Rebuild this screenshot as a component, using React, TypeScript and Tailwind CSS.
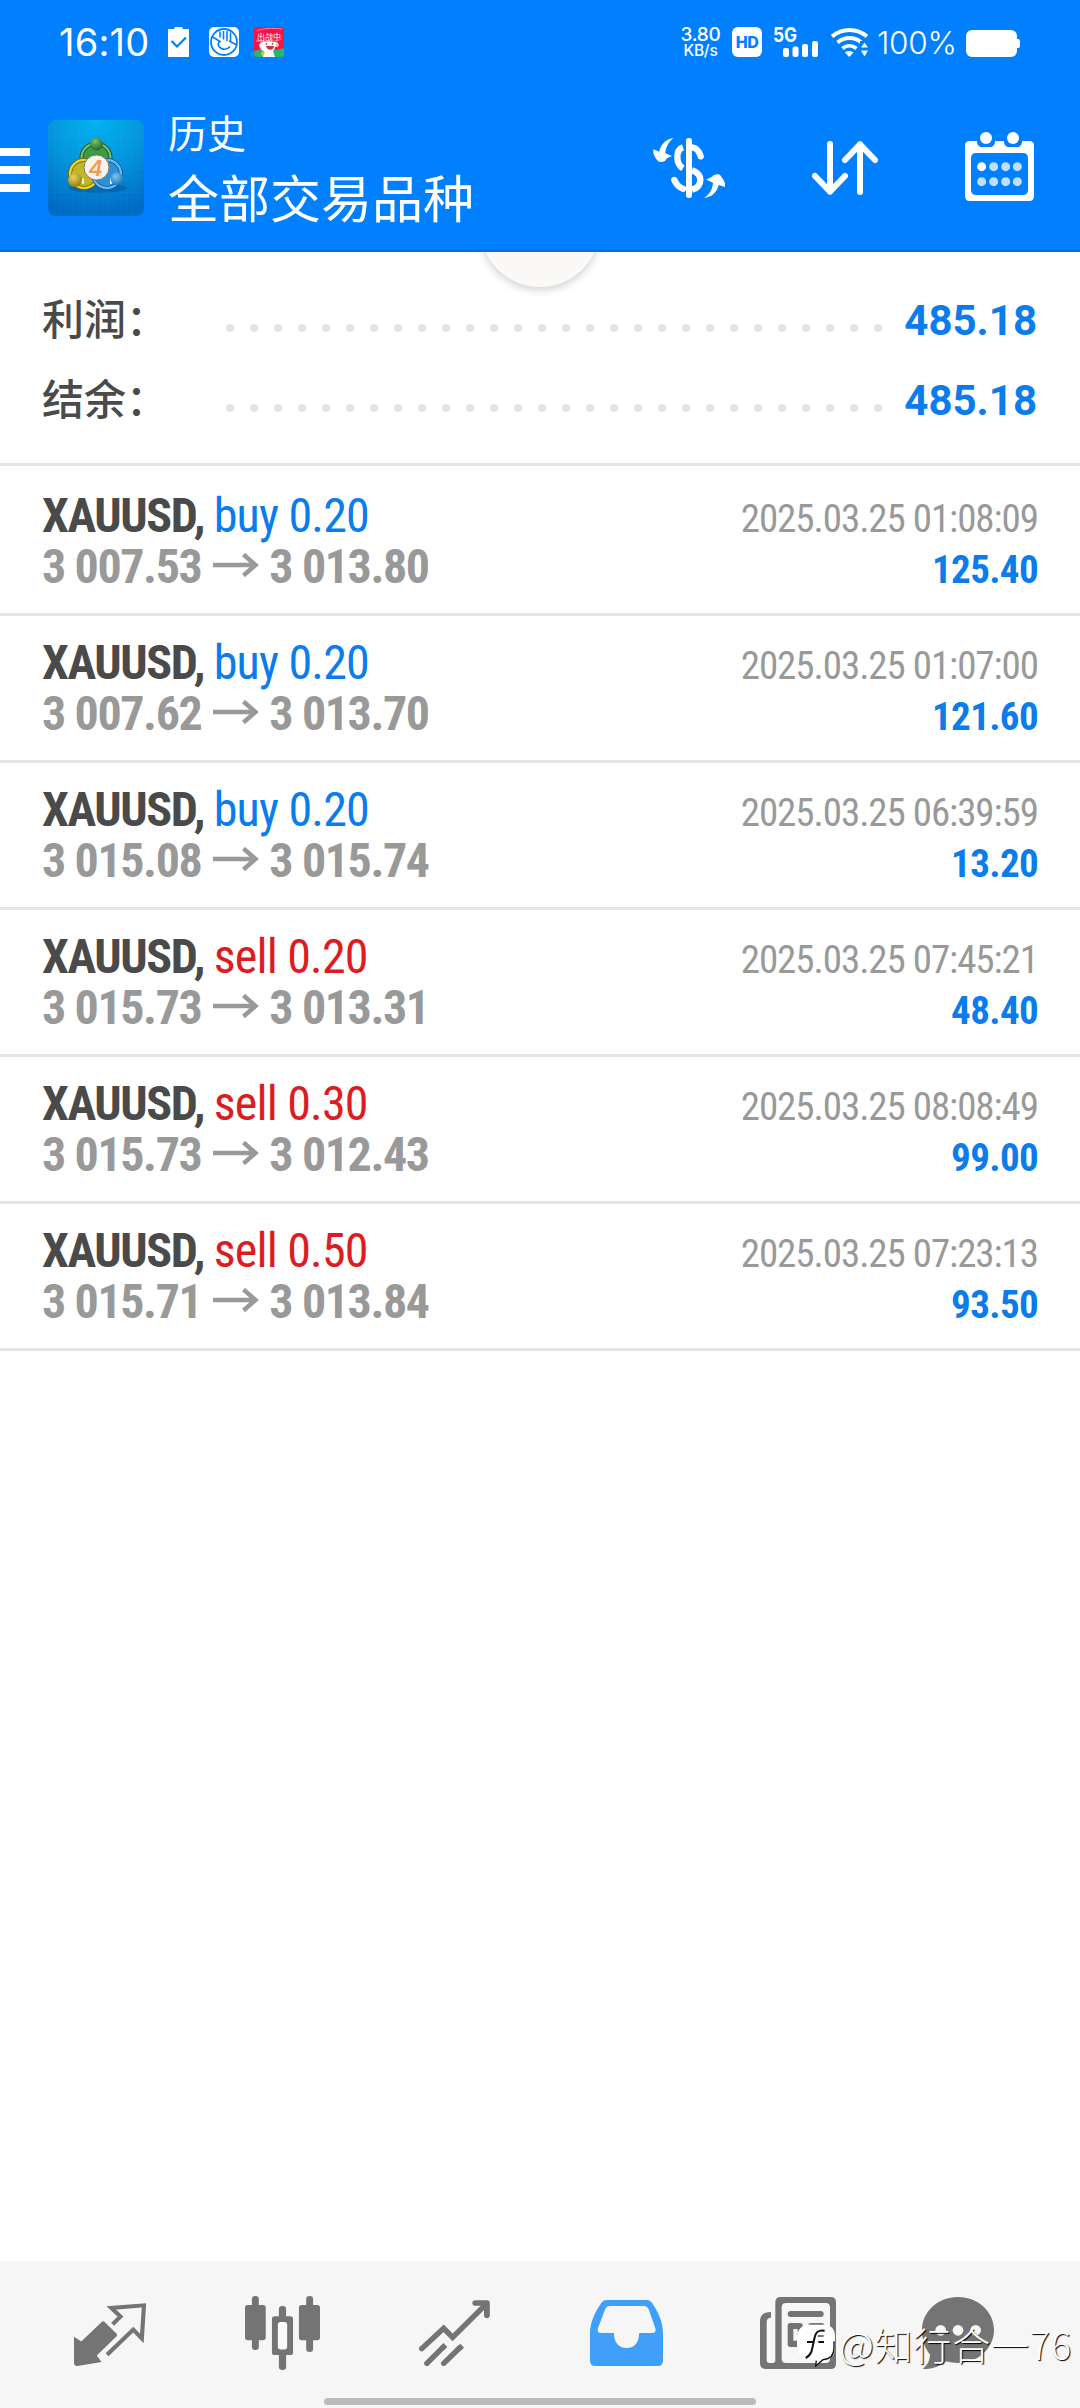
import React from 'react';
import clsx from 'clsx';

interface Deal {
  symbol: string;
  side: 'buy' | 'sell';
  volume: string;
  open: string;
  close: string;
  time: string;
  profit: string;
}

const deals: Deal[] = [
  { symbol: 'XAUUSD', side: 'buy', volume: '0.20', open: '3 007.53', close: '3 013.80', time: '2025.03.25 01:08:09', profit: '125.40' },
  { symbol: 'XAUUSD', side: 'buy', volume: '0.20', open: '3 007.62', close: '3 013.70', time: '2025.03.25 01:07:00', profit: '121.60' },
  { symbol: 'XAUUSD', side: 'buy', volume: '0.20', open: '3 015.08', close: '3 015.74', time: '2025.03.25 06:39:59', profit: '13.20' },
  { symbol: 'XAUUSD', side: 'sell', volume: '0.20', open: '3 015.73', close: '3 013.31', time: '2025.03.25 07:45:21', profit: '48.40' },
  { symbol: 'XAUUSD', side: 'sell', volume: '0.30', open: '3 015.73', close: '3 012.43', time: '2025.03.25 08:08:49', profit: '99.00' },
  { symbol: 'XAUUSD', side: 'sell', volume: '0.50', open: '3 015.71', close: '3 013.84', time: '2025.03.25 07:23:13', profit: '93.50' },
];

const summary = [
  { label: '利润：', value: '485.18' },
  { label: '结余：', value: '485.18' },
];

const StatusBar = () => (
  <div className="flex h-[84px] items-center justify-between pl-[59px] pr-[60px]">
    <div className="flex items-center">
      <span className="w-[109px] whitespace-nowrap font-[Inter,sans-serif] text-[38px] leading-[44px] tracking-[0.2px]">16:10</span>
      <svg className="w-[21px] h-[30px]" viewBox="0 0 21 30">
        <path d="M0 2h6l1-2h7l1 2h6v28H0z" fill="currentColor" />
        <path d="M3.500 14l5.500 5.500 9-9" fill="none" stroke="#0080ff" strokeWidth="2.200" />
      </svg>
      <svg className="ml-5 w-[30px] h-[30px]" viewBox="0 0 30 30">
        <rect width="30" height="30" rx="5" fill="currentColor" />
        <circle cx="15" cy="15" r="13" fill="none" stroke="#0080ff" strokeWidth="1.800" />
        <path d="M3 9.500l8 5c-2 1-2.500 3-1 5 3 4 8.500 3.500 11 0M20 14l7 3.500M11 4.500v6M14.500 4v8.500M18 4v10M21.500 5.500v9" fill="none" stroke="#0080ff" strokeWidth="1.600" />
      </svg>
      <svg className="ml-[15px] w-[30px] h-[30px]" viewBox="0 0 30 30">
        <rect width="30" height="30" rx="2" fill="#f5134a" />
        <path d="M0 24l8-2 14 1 8-2v7a2 2 0 0 1-2 2H2a2 2 0 0 1-2-2z" fill="#27b573" />
        <path d="M3 4c5-3 16-3 25-2M2 14c8 1 18 1 26-2" stroke="#ff7c9c" fill="none" />
        <text x="15" y="12.500" textAnchor="middle" fontSize="8" fill="#fff" fontFamily="Noto Sans CJK SC, sans-serif">出战中</text>
        <path d="M5 18c1-3 4-4 7-3 2-1 5-1 7 0 3-1 6 1 6 4l-4 1c0 2-1 3-2 4l2 6H9l1-6c-2 0-4-3-5-6z" fill="#fff" />
        <path d="M12 19h8c0 5-7 5-8 0" fill="#cf3045" />
        <path d="M22 16l3 2-2 3zM8 24l3 1-2 4-2-1z" fill="#f7b53a" />
        <circle cx="12.500" cy="17" r=".8" fill="#222" />
        <circle cx="18.500" cy="17" r=".8" fill="#222" />
      </svg>
    </div>
    <div className="flex items-center font-[Inter,sans-serif]">
      <div className="flex w-[39px] flex-col items-center whitespace-nowrap font-medium">
        <span className="text-[19px] leading-[17px] tracking-[-0.3px]">3.80</span>
        <span className="text-[15.500px] leading-[15px] tracking-[-0.2px]">KB/s</span>
      </div>
      <div className="ml-[12px] flex h-[30px] w-[30px] items-center justify-center rounded-[6px] bg-white text-[16px] font-extrabold tracking-[-0.5px] text-[#0080ff]">HD</div>
      <svg className="ml-[11px] w-[46px] h-[30px] overflow-visible" viewBox="0 0 46 30">
        <text x="0" y="15" fontSize="20" fontWeight="700" textLength="24" lengthAdjust="spacingAndGlyphs" fill="currentColor">5G</text>
        <rect x="10" y="21" width="6" height="9" rx="2" fill="currentColor" />
        <rect x="19.500" y="19.500" width="6" height="10.500" rx="2" fill="currentColor" />
        <rect x="29" y="17" width="6" height="13" rx="2" fill="currentColor" />
        <rect x="39" y="14" width="6" height="16" rx="2" fill="currentColor" />
      </svg>
      <svg className="ml-[12px] w-[37px] h-[30px]" viewBox="0 0 37 30">
        <g fill="none" stroke="currentColor" strokeWidth="3.800">
          <path d="M1 9.500C11 .800 26 .800 36 9.500" />
          <path d="M6.500 15.500c7-6 17-6 24 0" />
          <path d="M11.500 21.500c4-3.500 9.500-3.500 14 0" />
        </g>
        <path d="M14 25.500c2.500-2 6-2 8.500 0L18.200 30z" fill="currentColor" />
        <path d="M29 14h9v16h-9z" fill="#0080ff" />
        <path d="M33.500 15.500l3.500 5h-7zM33.500 29.500l3.500-6h-7z" fill="currentColor" />
      </svg>
      <span className="ml-[9px] w-[80px] whitespace-nowrap text-[31.500px] font-light leading-[34px] tracking-[-0.3px] pt-[2px]">100%</span>
      <svg className="ml-[9px] w-[54px] h-[27px] mt-[2px]" viewBox="0 0 54 27">
        <rect width="51" height="27" rx="6" fill="currentColor" />
        <rect x="46" y="9" width="8" height="9" rx="2" fill="currentColor" />
      </svg>
    </div>
  </div>
);

const AppLogo = () => (
  <svg className="ml-[18px] mt-9 w-24 h-24" viewBox="0 0 96 96">
    <defs>
      <radialGradient id="tile" cx=".5" cy="0" r="1">
        <stop offset="0" stopColor="#00b4f0" />
        <stop offset=".5" stopColor="#0494dc" />
        <stop offset="1" stopColor="#0069c4" />
      </radialGradient>
      <radialGradient id="green" cx=".4" cy=".3" r=".7">
        <stop offset="0" stopColor="#7fbf6d" />
        <stop offset="1" stopColor="#1d6e2c" />
      </radialGradient>
      <radialGradient id="gold" cx=".4" cy=".3" r=".7">
        <stop offset="0" stopColor="#e6d566" />
        <stop offset="1" stopColor="#94820f" />
      </radialGradient>
      <radialGradient id="blue" cx=".4" cy=".3" r=".7">
        <stop offset="0" stopColor="#7fc6f2" />
        <stop offset="1" stopColor="#1673bd" />
      </radialGradient>
      <pattern id="mesh" width="6" height="6" patternUnits="userSpaceOnUse">
        <path d="M0 0h6M0 0v6" stroke="#3cc0f2" strokeWidth=".5" opacity=".2" />
      </pattern>
    </defs>
    <rect width="96" height="96" rx="8" fill="url(#tile)" />
    <rect width="96" height="96" rx="8" fill="url(#mesh)" />
    <ellipse cx="50" cy="68" rx="29" ry="5" fill="#023f78" opacity=".35" />
    <circle cx="48" cy="38" r="14.500" fill="#3f9a48" stroke="#1a5c2a" strokeWidth="4" />
    <circle cx="48" cy="38" r="14.500" fill="none" stroke="#7fc56d" strokeWidth="2" />
    <circle cx="36" cy="54" r="14" fill="#c4b623" stroke="#675c06" strokeWidth="4" />
    <circle cx="36" cy="54" r="14" fill="none" stroke="#e0d136" strokeWidth="2.500" />
    <circle cx="59" cy="54" r="14" fill="#2f90da" stroke="#0d4f8d" strokeWidth="4" />
    <circle cx="59" cy="54" r="14" fill="none" stroke="#62b9f0" strokeWidth="2.500" />
    <path d="M30 62l6-4v6zM62 64v-6l6 5z" fill="#eef5ea" />
    <circle cx="48.500" cy="24" r="6.500" fill="url(#green)" />
    <circle cx="27" cy="60" r="7" fill="url(#gold)" />
    <circle cx="69" cy="59" r="6.500" fill="url(#blue)" />
    <circle cx="48.500" cy="47.500" r="12.500" fill="#f6f3f0" stroke="#77806a" strokeWidth="1" />
    <text x="47.500" y="55.500" textAnchor="middle" fontSize="22" fontWeight="600" fontStyle="italic" fill="#f59a4a" fontFamily="Inter, sans-serif">4</text>
  </svg>
);

const CurrencyIcon = () => (
  <svg className="w-[72px] h-[60px]" viewBox="42 369 216 180" fill="currentColor">
    <rect x="141" y="369" width="18" height="180" rx="8" />
    <g fill="none" stroke="currentColor" strokeWidth="19">
      <path d="M132 397c-12 4-17 14-17 29 0 18 7 28 17 34" />
      <path d="M159 397c12 1 21 9 26 27" strokeLinecap="round" />
      <path d="M159 466c18 6 25 17 25 29 0 16-10 25-25 29" />
      <path d="M132 521c-12-4-20-12-26-26" strokeLinecap="round" />
    </g>
    <path d="M104 369c-16 12-24 28-25 46l20 8-14 6c-4 3-5 8-9 10-5 2-14 3-18 0-8-10-17-19-15-36l18 7c4-22 20-38 43-41z" />
    <path d="M195 549c18-12 26-28 27-46l-20-9 14-7c4-3 6-6 11-8 6-2 14-3 18 3 6 10 15 16 13 34l-19-6c-5 22-20 36-44 39z" />
  </svg>
);

const SortIcon = () => (
  <svg className="w-[66px] h-[54px]" viewBox="519 378 198 162" fill="none" stroke="currentColor" strokeWidth="18" strokeLinecap="round" strokeLinejoin="round">
    <path d="M573 387v143M528 483l45 47 45-47M663 531V388M618 435l45-47 45 47" />
  </svg>
);

const CalendarIcon = () => (
  <svg className="w-[69px] h-[69px]" viewBox="978 351 207 207" fill="currentColor">
    <path fillRule="evenodd" d="M992 378h22c0 12 6 18 16 18h22c10 0 16-6 16-18h27c0 12 6 18 16 18h22c10 0 16-6 16-18h22q14 0 14 14v152q0 14-14 14H992q-14 0-14-14V392q0-14 14-14zM1012 414q-16 0-16 16v94q0 16 16 16h139q16 0 16-16v-94q0-16-16-16z" />
    <circle cx="1041" cy="369" r="18" />
    <circle cx="1122" cy="369" r="18" />
    <circle cx="1028" cy="455" r="13.500" />
    <g opacity=".75">
      <circle cx="1064" cy="455" r="13.500" />
      <circle cx="1100" cy="455" r="13.500" />
      <circle cx="1135" cy="455" r="13.500" />
      <circle cx="1028" cy="500" r="13.500" />
      <circle cx="1064" cy="500" r="13.500" />
      <circle cx="1100" cy="500" r="13.500" />
      <circle cx="1135" cy="500" r="13.500" />
    </g>
  </svg>
);

const Header = () => (
  <header className="relative z-10 h-[252px] border-b-[3px] border-[#0b6fd6] bg-[#0080ff] text-white">
    <StatusBar />
    <div className="flex h-[165px] items-start">
      <div className="mt-16 flex w-[30px] flex-col gap-[10px]">
        <div className="h-2 bg-white" />
        <div className="h-2 bg-white" />
        <div className="h-2 bg-white" />
      </div>
      <AppLogo />
      <div className="ml-6 flex-1 whitespace-nowrap pt-[24px] font-['Noto_Sans_CJK_SC',sans-serif]">
        <div className="text-[39px] leading-[46px]">历史</div>
        <div className="pt-[10px] text-[51px] leading-[64px]">全部交易品种</div>
      </div>
      <div className="flex h-[165px] items-center pr-[46px] pt-[3px]">
        <CurrencyIcon />
        <div className="ml-[87px]"><SortIcon /></div>
        <div className="ml-[87px] -mt-[3px]"><CalendarIcon /></div>
      </div>
    </div>
  </header>
);

const Summary = () => (
  <section className="relative h-[214px] overflow-hidden border-b-[3px] border-[#e5e5e5] pt-[27px]">
    {/* pull-to-refresh handle, half hidden under the header */}
    <div className="absolute left-[480px] top-[-85px] h-[120px] w-[120px] rounded-full bg-[#faf9f8] shadow-[0_3px_9px_rgba(0,0,0,0.18)]" />
    {summary.map((item) => (
      <div key={item.label} className="relative flex h-20 items-center pl-[42px] pr-[43px]">
        <span className="w-[184px] pb-[5px] font-['Noto_Sans_CJK_SC',sans-serif] text-[42px] font-medium leading-[60px] text-[#4a4a4a]">{item.label}</span>
        <div className="flex flex-1 gap-4 pt-[18px]">
          {Array.from({ length: 28 }).map((_, i) => (
            <div key={i} className="h-2 w-2 shrink-0 rounded-full bg-[#e3e3e3]" />
          ))}
        </div>
        <span className="pt-[3px] font-[Roboto,sans-serif] text-[42px] font-bold leading-[60px] text-[#0a7cec]">{item.value}</span>
      </div>
    ))}
  </section>
);

const DealRow = ({ deal }: { deal: Deal }) => (
  <div className="flex h-[147px] justify-between border-b-[3px] border-[#e5e5e5] pl-[42px] pr-[42px] pt-[21px] font-['Roboto_Condensed',Roboto,sans-serif]">
    <div className="whitespace-nowrap text-[48px] leading-[51px]">
      <div>
        <span className="font-bold tracking-[-1.4px] text-[#4a4a4a]">{deal.symbol}, </span>
        <span className={clsx('tracking-[-0.8px]', deal.side === 'buy' ? 'text-[#0a7cec]' : 'text-[#dd1c22]')}>
          {deal.side} {deal.volume}
        </span>
      </div>
      <div className="flex items-center font-bold tracking-[-1.4px] text-[#999999]">
        <span>{deal.open}</span>
        <svg className="ml-[12px] mr-[10px] -mt-1 w-[46px] h-6" viewBox="0 0 46 24" fill="none" stroke="currentColor" strokeWidth="4.500">
          <path d="M0 12h43M30.500 1.500L42.500 12l-12 10.500" />
        </svg>
        <span>{deal.close}</span>
      </div>
    </div>
    <div className="whitespace-nowrap pt-[4px] text-right text-[39px] leading-[51px]">
      <div className="tracking-[-1.05px] text-[#999999]">{deal.time}</div>
      <div className="font-bold tracking-[-0.65px] text-[#0a7cec]">{deal.profit}</div>
    </div>
  </div>
);

const QuotesIcon = () => (
  <svg className="w-[72px] h-[63px]" viewBox="215 188 209 190" preserveAspectRatio="none">
    <path d="M297 244q4-2 7 1l34 35q4 5 0 9l-57 57 14 20-70 12q-10 1-10-8v-80l21 14z" fill="currentColor" />
    <path d="M327 252l23-23-27-26 95-8-6 100-25-27-76 76" fill="none" stroke="currentColor" strokeWidth="12" />
  </svg>
);

const ChartIcon = () => (
  <svg className="w-[75px] h-[74px]" viewBox="709 170 217 223" preserveAspectRatio="none" fill="currentColor">
    <rect x="729" y="170" width="20" height="163" rx="10" />
    <rect x="709" y="197" width="60" height="106" rx="8" />
    <rect x="886" y="170" width="20" height="169" rx="10" />
    <rect x="865" y="197" width="61" height="106" rx="8" />
    <rect x="807" y="200" width="21" height="193" rx="10" />
    <rect x="787" y="231" width="61" height="117" rx="8" />
    <rect x="804" y="248" width="27" height="83" rx="8" fill="#fafafa" />
  </svg>
);

const TradeIcon = () => (
  <svg className="w-[71px] h-[66px]" viewBox="1213 180 207 198" preserveAspectRatio="none" fill="none" stroke="currentColor" strokeWidth="16">
    <path d="M1221 326l64-61 26 27 94-96" strokeLinecap="round" />
    <path d="M1377 189h34v37" strokeWidth="17" strokeLinecap="round" strokeLinejoin="round" />
    <path d="M1290 315l-10 10M1339 317l-10 9" />
    <path d="M1282 323l-46 47M1331 324l-46 46" strokeLinecap="round" />
  </svg>
);

const HistoryIcon = () => (
  <svg className="w-[73px] h-[66px]" viewBox="145 180 211 198" preserveAspectRatio="none" fill="currentColor">
    <path fillRule="evenodd" d="M192 180h118q9 0 14 8c18 28 32 57 32 92v82q0 16-16 16H161q-16 0-16-16v-82c0-34 15-65 33-92q5-8 14-8zM203 198q-10 0-14 9l-21 58q-4 14 9 14h37c0 28 14 45 37 45s36-17 36-45h37q14 0 10-14l-19-56q-4-11-14-11z" />
  </svg>
);

const NewsIcon = () => (
  <svg className="w-[76px] h-[72px]" viewBox="66 51 228 216" fill="currentColor">
    <path fillRule="evenodd" d="M128 51h150q16 0 16 16v184q0 16-16 16H84q-18 0-18-18V124q0-28 33-28v17q-13 0-13 13v115q0 8 8 8h10q8 0 8-8V67q0-16 16-16zM144 69q-13 0-13 13v154q0 13 13 13h119q13 0 13-13V82q0-13-13-13z" />
    <rect x="149" y="93" width="108" height="18" rx="9" />
    <rect x="149" y="129" width="45" height="72" rx="8" />
    <rect x="211" y="129" width="48" height="17" rx="8" />
    <path d="M166 147h13v35h-13z" fill="#f6f6f6" />
  </svg>
);

const ChatIcon = () => (
  <svg className="w-[72px] h-[72px]" viewBox="546 51 216 216" fill="currentColor">
    <path d="M654 51c60 0 108 44 108 99s-48 99-108 99c-12 0-24-2-35-5-20 15-45 26-71 22 14-10 21-23 22-42-16-20-24-45-24-74 0-55 48-99 108-99z" />
    <g fill="#f6f6f6">
      <circle cx="602" cy="151" r="16" />
      <circle cx="654" cy="151" r="16" />
      <circle cx="707" cy="151" r="16" />
    </g>
  </svg>
);

const tabs = [QuotesIcon, ChartIcon, TradeIcon, HistoryIcon, NewsIcon, ChatIcon];

const TabBar = () => (
  <nav className="flex h-[147px] flex-col items-center bg-[#f6f6f6] text-[#747474]">
    <div className="flex h-[137px] w-full pl-6 pb-[17px]">
      {tabs.map((Icon, i) => (
        <div
          key={i}
          className={clsx(
            'flex shrink-0 items-center justify-center pt-[23px]',
            i === tabs.length - 1 ? 'w-[147px]' : 'w-[172px]',
            i === 3 && 'text-[#3f9ffb]',
            i === 0 && 'pt-[26px]',
          )}
        >
          <Icon />
        </div>
      ))}
    </div>
    <div className="h-[7px] w-[432px] rounded-full bg-[#bbbbbb]" />
  </nav>
);

const Watermark = () => (
  <div className="absolute bottom-[39px] right-[8px] z-20 flex items-center whitespace-nowrap text-white">
    <svg className="mr-[4px] mt-[2px] w-[38px] h-[44px]" viewBox="160 146 114 130">
      <path d="M199 150h40q35 0 35 36v34q0 32-33 35l-26 20 3-20q-56 0-58-37v-30q2-38 39-38z" fill="currentColor" />
      <path d="M271 200v20q0 32-33 35l-22 19 2-16" fill="none" stroke="#111" strokeWidth="4" />
      <path d="M243 168c-20-3-27 4-30 20l-7 32c-2 14-8 24-20 30M190 202h22M224 202h17" fill="none" stroke="#111" strokeWidth="6" />
      <path d="M222 184h18" stroke="#747474" strokeWidth="6" />
    </svg>
    <span className="font-['Noto_Sans_CJK_SC',sans-serif] text-[38px] font-light leading-[50px] tracking-[0.8px] [text-shadow:1px_1px_1px_#000]">@知行合一76</span>
  </div>
);

export default function App() {
  return (
    <div className="relative flex h-[2408px] w-[1080px] flex-col overflow-hidden bg-white">
      <Header />
      <Summary />
      <main className="flex-1 pt-[3px]">
        {deals.map((deal) => (
          <DealRow key={deal.time} deal={deal} />
        ))}
      </main>
      <TabBar />
      <Watermark />
    </div>
  );
}
